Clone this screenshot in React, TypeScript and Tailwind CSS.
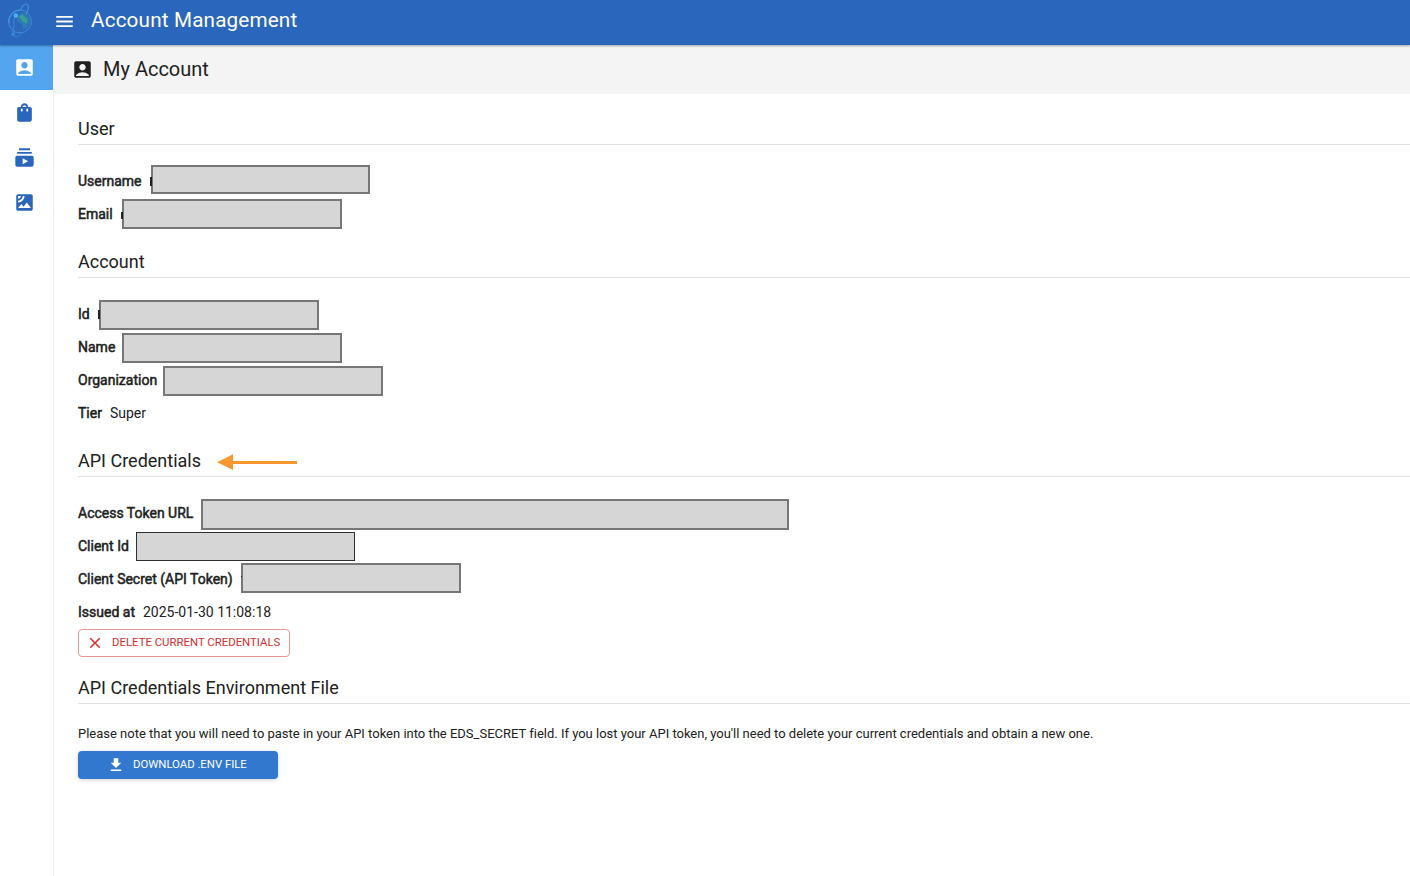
import React from "react";
import {
  MdAccountBox,
  MdClose,
  MdGetApp,
  MdMenu,
  MdSatellite,
  MdShoppingBag,
  MdSubscriptions,
} from "react-icons/md";

function GlobeLogo() {
  return (
    <svg width="28" height="36" viewBox="0 0 28 36" fill="none">
      <circle cx="14" cy="18.500" r="11.4" fill="#2968bb" stroke="#3f8cdb" strokeWidth="1" />
      <path d="M3 20 A11.4 11.4 0 0 1 14 7.100" stroke="#3f96e2" strokeWidth="1.2" />
      <path
        d="M11 13 l4 -3.5 5 1 3.500 4 1 5 -4 6 -3 1 -1.500 -5 -4 -2.500 -1 -3 z"
        fill="#2d7ab6"
      />
      <path d="M12.500 13.500 l4 -2 2.500 2.500 2.500 3 -1 3.500 -2.500 -1 -3 -3 z" fill="#38a08f" />
      <path
        d="M14.500 7 C16 2.500 20 -0.500 21.700 1.800 C23 4.500 22 8 20 11"
        stroke="#3f92de"
        strokeWidth="1.100"
      />
      <path
        d="M9 12 C7.500 19 7.500 25 8 30 M6 27 C6.500 32 9 35 12.500 33.500 C14.500 32.500 15 31 14.500 30"
        stroke="#3c82d6"
        strokeWidth="1"
      />
      <circle cx="9.800" cy="12.500" r="2.300" fill="#4cb0f0" />
      <circle cx="7.200" cy="31.200" r="1.700" fill="#3a86e0" />
    </svg>
  );
}

function Section({ title, extra, children }: { title: string; extra?: React.ReactNode; children: React.ReactNode }) {
  return (
    <section className="mb-4">
      <h2 className="mb-5 flex h-[31px] items-center border-b border-[#dfdfdf] text-[18px]">
        <span className="-mt-0.5">{title}</span>
        {extra}
      </h2>
      {children}
    </section>
  );
}

function Row({
  label,
  value,
  mask,
  peek,
}: {
  label: string;
  value?: string;
  mask?: string;
  peek?: string;
}) {
  return (
    <div className="relative flex h-[33px] items-center gap-2 text-[14px]">
      <span className="[-webkit-text-stroke:0.5px_#212121]">{label}</span>
      {value && <span>{value}</span>}
      {mask && <span className={`absolute bg-[#d6d6d6] ${mask}`} />}
      {peek && <span className={`absolute ${peek}`} />}
    </div>
  );
}

const NAV = [MdAccountBox, MdShoppingBag, MdSubscriptions, MdSatellite];

export default function App() {
  return (
    <div className="flex h-[876px] w-full flex-col overflow-hidden bg-white font-[Roboto,sans-serif] text-[#212121]">
      <header className="z-10 flex h-[45px] shrink-0 items-center bg-[#2a66bc] pl-[6px] text-white shadow-[0_1px_2px_rgba(0,0,0,0.35)]">
        <div className="-mt-1">
          <GlobeLogo />
        </div>
        <MdMenu className="mt-[-2px] ml-[19px] size-[23px] p-[0.5px]" />
        <h1 className="mt-[-4px] ml-[15px] text-[20.7px] tracking-[0.0075em]">Account Management</h1>
      </header>
      <div className="flex min-h-0 grow">
        <nav className="flex w-[54px] shrink-0 flex-col border-r border-[#eeeeee]">
          {NAV.map((Icon, i) => (
            <a
              key={i}
              className={`flex h-[45px] items-center pl-[13px] ${
                i === 0 ? "-mr-px w-[53px] bg-[#53a5f0] text-white" : "text-[#2a66bc]"
              }`}
            >
              <Icon className="size-[23px] p-[0.5px]" />
            </a>
          ))}
        </nav>
        <main className="flex min-w-0 grow flex-col">
          <div className="flex h-[49px] shrink-0 items-center bg-[#f4f4f4] pl-[17px]">
            <MdAccountBox className="-mt-px size-[23px] p-[0.5px]" />
            <h1 className="-mt-0.5 ml-[9px] text-[20px]">My Account</h1>
          </div>
          <div className="pt-5 pl-6">
            <Section title="User">
              <Row
                label="Username"
                peek="left-[72px] top-[12px] h-[9px] w-[2px] bg-[#222222]"
                mask="left-[73px] top-0 h-[29px] w-[219px] border-2 border-[#777777]"
              />
              <Row
                label="Email"
                peek="left-[43px] top-[14px] h-[7px] w-[2px] bg-[#222222]"
                mask="left-[44px] top-[1px] h-[30px] w-[220px] border-2 border-[#777777]"
              />
            </Section>
            <Section title="Account">
              <Row
                label="Id"
                peek="left-[20px] top-[12px] h-[9px] w-[2px] bg-[#222222]"
                mask="left-[21px] top-[2px] h-[30px] w-[220px] border-2 border-[#777777]"
              />
              <Row label="Name" mask="left-[44px] top-[2px] h-[30px] w-[220px] border-2 border-[#777777]" />
              <Row label="Organization" mask="left-[85px] top-[2px] h-[30px] w-[220px] border-2 border-[#777777]" />
              <Row label="Tier" value="Super" />
            </Section>
            <Section
              title="API Credentials"
              extra={
                <svg className="mt-px ml-4" width="80" height="16" viewBox="0 0 80 16">
                  <path d="M0 8.200 L16 0.200 V7 H80 V10 H16 V16 Z" fill="#fa982f" />
                </svg>
              }
            >
              <Row label="Access Token URL" mask="left-[123px] top-[2px] h-[31px] w-[588px] border-2 border-[#777777]" />
              <Row label="Client Id" mask="left-[58px] top-[2px] h-[29px] w-[219px] border border-[#303030]" />
              <Row
                label="Client Secret (API Token)"
                peek="left-[163px] top-[13px] h-px w-px bg-[#222222]"
                mask="left-[163px] top-0 h-[30px] w-[220px] border-2 border-[#777777]"
              />
              <Row label="Issued at" value="2025-01-30 11:08:18" />
              <button className="flex h-7 w-[212px] items-center rounded-[4px] border border-[#e79598] pl-[7px] text-[11.400px] text-[#d32f2f]">
                <MdClose className="size-[18px]" />
                <span className="ml-2 tracking-[-0.01px]">DELETE CURRENT CREDENTIALS</span>
              </button>
            </Section>
            <Section title="API Credentials Environment File">
              <p className="-mt-2 flex h-[35px] items-center text-[13px] tracking-[-0.006px]">
                Please note that you will need to paste in your API token into the EDS_SECRET field. If you lost your
                API token, you'll need to delete your current credentials and obtain a new one.
              </p>
              <button className="flex h-7 w-[200px] items-center rounded-[4px] bg-[#3178ce] pl-[29px] text-[11.400px] text-white shadow-[0_1px_4px_rgba(0,0,0,0.18)]">
                <MdGetApp className="size-[18px]" />
                <span className="ml-2 tracking-[-0.04px]">DOWNLOAD .ENV FILE</span>
              </button>
            </Section>
          </div>
        </main>
      </div>
    </div>
  );
}
